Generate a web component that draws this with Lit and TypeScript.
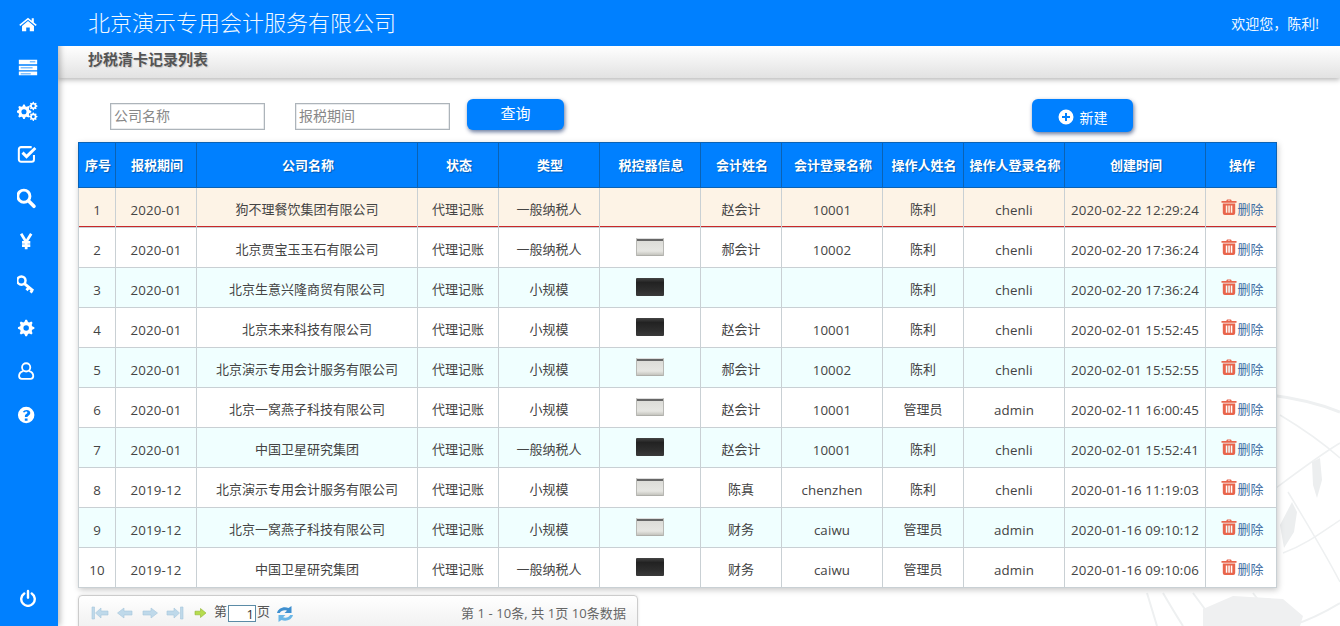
import { LitElement, html, css, svg } from "lit";
import { customElement } from "lit/decorators.js";

const gear = (cx: number, cy: number, r: number, hole: number, teeth = 8) => {
  let d = "";
  for (let i = 0; i < teeth * 4; i++) {
    const a = (i / (teeth * 4)) * Math.PI * 2 - Math.PI / teeth / 4 * 1;
    const R = i % 4 < 2 ? r : r * 0.76;
    d += `${i ? "L" : "M"}${(cx + R * Math.cos(a)).toFixed(2)} ${(cy + R * Math.sin(a)).toFixed(2)}`;
  }
  d += `Z M${cx + hole} ${cy}A${hole} ${hole} 0 1 0 ${cx - hole} ${cy}A${hole} ${hole} 0 1 0 ${cx + hole} ${cy}Z`;
  return d;
};

const icons = [
  svg`<g transform="translate(12 12) scale(.88) translate(-12 -12)"><path fill="#fff" d="M12 4.200 1.200 13l1.200 1.500L12 6.700l9.600 7.800 1.200-1.500-3.600-2.900V5h-2.600v3L12 4.200Z"/><path fill="#fff" d="M12 8.400 4.600 14.400V21h5.200v-4.600h4.400V21h5.200v-6.600L12 8.400Z"/></g>`,
  svg`<path fill="#fff" fill-rule="evenodd" d="M2 4h20v5H2V4Zm0 6.500h20v5H2v-5ZM2 17h20v4H2v-4Zm2 2v.8h11V19H4Zm0-6.400v.8h13v-.8H4ZM14 6v.8h6V6h-6Z"/>`,
  svg`<g transform="translate(-1 0)"><path fill="#fff" fill-rule="evenodd" d="${gear(8.6, 12.8, 8, 2.8)}"/><path fill="#fff" fill-rule="evenodd" d="${gear(18.8, 6.6, 4.6, 1.6)}"/><path fill="#fff" fill-rule="evenodd" d="${gear(18.8, 18.2, 4.6, 1.6)}"/></g>`,
  svg`<g transform="translate(-1 0)"><path fill="none" stroke="#fff" stroke-width="2.200" d="M19.500 13v5a2.500 2.500 0 0 1-2.500 2.500H5.500A2.500 2.500 0 0 1 3 18V7a2.500 2.500 0 0 1 2.500-2.500H17"/><path fill="none" stroke="#fff" stroke-width="3.200" d="m7 10.500 4.400 4.400L21 5.500"/></g>`,
  svg`<g transform="translate(-2.500 0)"><circle cx="10" cy="10" r="6.600" fill="none" stroke="#fff" stroke-width="3.200"/><path stroke="#fff" stroke-width="4" stroke-linecap="round" d="m15.500 15.500 5.500 5.500"/></g>`,
  svg`<g transform="translate(-2 0)"><path fill="none" stroke="#fff" stroke-width="3" d="m6.500 4 5.500 9 5.500-9M12 12v9M7.500 13.500h9M7.500 17h9"/></g>`,
  svg`<g transform="translate(-2.500 0) scale(.96)"><circle cx="7.600" cy="8.600" r="4.700" fill="none" stroke="#fff" stroke-width="2.800"/><path fill="none" stroke="#fff" stroke-width="3.200" d="m11 12 10 8.400M16 16.600l-2.600 3M20 19.800l-2 2.400"/></g>`,
  svg`<path fill="#fff" fill-rule="evenodd" d="${gear(10, 12, 9, 3)}"/>`,
  svg`<g transform="translate(10 12) scale(.9) translate(-12 -12)"><circle cx="12" cy="7.600" r="5" fill="none" stroke="#fff" stroke-width="2.200"/><path fill="none" stroke="#fff" stroke-width="2.200" d="M8.600 12.200C5.400 13 3.400 15 3.400 18.200c0 2.200 1.300 3.300 3.200 3.300h10.800c1.900 0 3.200-1.100 3.200-3.300 0-3.200-2-5.200-5.200-6"/></g>`,
  svg`<g transform="translate(10 12) scale(.88) translate(-12 -12)"><path fill="#fff" fill-rule="evenodd" d="M12 1.800a10.200 10.200 0 1 0 0 20.400 10.200 10.200 0 0 0 0-20.400ZM10.300 16.200h3.400v3h-3.400v-3Zm3.400-1.800h-3.300v-1c0-1.600.9-2.400 2-3.100.8-.5 1.100-.9 1.100-1.500 0-.7-.6-1.100-1.400-1.100-.9 0-1.700.5-2.300 1.300L7.800 8.300C8.800 6.700 10.300 5.700 12.600 5.700c2.500 0 4.500 1.300 4.500 3.600 0 1.800-1 2.700-2.200 3.500-.9.600-1.200.9-1.200 1.600Z"/></g>`,
];

const power = svg`<path fill="none" stroke="#fff" stroke-width="3.200" stroke-linecap="round" d="M7 6a9 9 0 1 0 10 0"/><path stroke="#fff" stroke-width="3.200" stroke-linecap="round" d="M12 2.500v9"/>`;

const cols = [37, 81, 221, 81, 101, 101, 81, 101, 81, 101, 141, 71];
const latinCols = new Set([0, 1, 7, 9, 10]);
const heads = ["序号", "报税期间", "公司名称", "状态", "类型", "税控器信息", "会计姓名", "会计登录名称", "操作人姓名", "操作人登录名称", "创建时间", "操作"];
type Row = [string, string, string, string, "" | "l" | "d", string, string, string, string, string];
const rows: Row[] = [
  ["2020-01", "狗不理餐饮集团有限公司", "代理记账", "一般纳税人", "", "赵会计", "10001", "陈利", "chenli", "2020-02-22 12:29:24"],
  ["2020-01", "北京贾宝玉玉石有限公司", "代理记账", "一般纳税人", "l", "郝会计", "10002", "陈利", "chenli", "2020-02-20 17:36:24"],
  ["2020-01", "北京生意兴隆商贸有限公司", "代理记账", "小规模", "d", "", "", "陈利", "chenli", "2020-02-20 17:36:24"],
  ["2020-01", "北京未来科技有限公司", "代理记账", "小规模", "d", "赵会计", "10001", "陈利", "chenli", "2020-02-01 15:52:45"],
  ["2020-01", "北京演示专用会计服务有限公司", "代理记账", "小规模", "l", "郝会计", "10002", "陈利", "chenli", "2020-02-01 15:52:55"],
  ["2020-01", "北京一窝燕子科技有限公司", "代理记账", "小规模", "l", "赵会计", "10001", "管理员", "admin", "2020-02-11 16:00:45"],
  ["2020-01", "中国卫星研究集团", "代理记账", "一般纳税人", "d", "赵会计", "10001", "陈利", "chenli", "2020-02-01 15:52:41"],
  ["2019-12", "北京演示专用会计服务有限公司", "代理记账", "小规模", "l", "陈真", "chenzhen", "陈利", "chenli", "2020-01-16 11:19:03"],
  ["2019-12", "北京一窝燕子科技有限公司", "代理记账", "小规模", "l", "财务", "caiwu", "管理员", "admin", "2020-01-16 09:10:12"],
  ["2019-12", "中国卫星研究集团", "代理记账", "一般纳税人", "d", "财务", "caiwu", "管理员", "admin", "2020-01-16 09:10:06"],
];

const trash = html`<svg class="trash" viewBox="0 0 16 16"><path fill="#e8654c" fill-rule="evenodd" d="M5.200 2 6 .4h4L10.800 2H15.500v1.800H.5V2h4.700ZM6.800 2h2.400l-.3-.6H7.100L6.800 2ZM1.800 4.600h12.400V14a2 2 0 0 1-2 2H3.800a2 2 0 0 1-2-2V4.600ZM4.800 6.500v7.200h1.500V6.500H4.800Zm2.500 0v7.200h1.500V6.500H7.300Zm2.500 0v7.200h1.500V6.500H9.800Z"/></svg>`;

const arrow = (d: string, c = "#bfd9ea") => html`<svg class="pg" viewBox="0 0 18 16"><path fill="${c}" stroke="#a6c6dc" stroke-width=".6" d="${d}"/></svg>`;

@customElement("app-root")
export class AppRoot extends LitElement {
  static styles = css`
    :host { display: block; width: 100%; height: 626px; overflow: hidden; position: relative;
      font-family: "Open Sans", "Noto Sans CJK SC", sans-serif; font-size: 13px; color: #444; background: #fff; }
    * { box-sizing: border-box; }
    .shell { display: flex; height: 626px; }
    .side { width: 58px; flex: none; background: #0080ff; display: flex; flex-direction: column; align-items: center;
      padding: 13px 0 19px; box-shadow: 2px 0 6px rgba(0,0,0,.28); position: relative; z-index: 3; }
    .side svg { width: 22px; height: 22px; display: block; margin-left: -2px; }
    .side svg.off { width: 18px; height: 18px; }
    .side .item { height: 43.4px; flex: none; }
    .side .spacer { flex: 1; }
    .main { flex: 1; min-width: 0; display: flex; flex-direction: column; position: relative; overflow: hidden; }
    .globe { position: absolute; right: 0; bottom: 0; width: 200px; height: 236px; pointer-events: none; }
    .top { height: 46px; flex: none; background: #0080ff; color: #fff; display: flex; align-items: center;
      justify-content: space-between; padding: 0 0 0 30px; position: relative; z-index: 4; }
    .brand { font-size: 22px; font-weight: 300; line-height: 44px; height: 46px; color: #f0f8ff; }
    .hello { font-size: 14px; margin-right: 21px; color: #f0f8ff; padding-bottom: 1px; }
    .crumb { height: 32px; flex: none; background: linear-gradient(#fff, #e2e2e2); box-shadow: 0 2px 5px rgba(0,0,0,.28);
      padding-left: 30px; font-size: 15px; font-weight: 700; color: #555; line-height: 27px; position: relative; text-shadow: 1px 1px 1px rgba(0,0,0,.15); }
    .body { flex: 1; padding: 21px 0 0 20px; position: relative; }
    .bar { display: flex; height: 43px; align-items: flex-start; }
    .field { width: 155px; height: 27px; margin-top: 4px; border: 1px solid #adb4ba; box-shadow: inset 0 0 0 .5px #d4d8db;
      background: #fff; font: 14px "Open Sans", "Noto Sans CJK SC", sans-serif; color: #888; padding: 0 3px 2px; outline: none; }
    .field::placeholder { color: #888; }
    .f1 { margin-left: 32px; }
    .f2 { margin-left: 30px; }
    .btn { border: 0; background: #0080ff; color: #fff; border-radius: 6px; box-shadow: 1px 2px 4px rgba(0,30,90,.6);
      font: 14px "Open Sans", "Noto Sans CJK SC", sans-serif; display: flex; align-items: center; justify-content: center; padding: 0; }
    .q { width: 97px; height: 31px; margin-left: 17px; font-size: 15px; padding-bottom: 5px; }
    .n { width: 101px; height: 33px; margin-left: 468px; gap: 6px; padding: 2px 0 0 0; }
    .n svg { width: 16px; height: 16px; }
    table { border-collapse: collapse; table-layout: fixed; width: 1198px; background: #fff; box-shadow: 1px 2px 6px rgba(0,0,0,.22); position: relative; }
    th { height: 45px; background: #0080ff; color: #fff; font-size: 13px; font-weight: 700; border: 1px solid #0b62b4; padding: 0 0 1px 2px;
      text-shadow: 1px 1px 1px rgba(0,0,0,.3); white-space: nowrap; }
    td { height: 40px; border: 1px solid #c9d0d4; text-align: center; padding: 1px 0 0; font-size: 13px; color: #444; white-space: nowrap; }
    td.num { font-size: 13.3px; letter-spacing: .13px; padding-top: 4px; }
    td.act { padding-top: 3px; }
    tr.alt td { background: #f0ffff; }
    tr.sel td { background: #fdf3e6; box-shadow: inset 0 -1px 0 #c8282a; }
    .dev { display: block; width: 28px; height: 18px; margin: -3px auto 0; border-radius: 1px; }
    .dev.l { background: linear-gradient(#ddd 0 1px, #666 1px 3px, #dcdcd8 3px, #e6e6e2 13px, #c4c4be 17px, #9a9a96 18px); box-shadow: inset 1px 0 0 #b8b8b4, inset -1px 0 0 #b8b8b4; }
    .dev.d { background: linear-gradient(#444, #222 25%, #2e2e2e 70%, #3a3a3a); }
    .del { display: inline-flex; align-items: flex-end; margin-left: 3px; color: #3f6ea3; }
    .trash { width: 16px; height: 16px; margin-bottom: 3px; }
    .pager { width: 560px; height: 40px; margin-top: 7px; border: 1px solid #ccc; border-radius: 4px; background: linear-gradient(#fff, #eee);
      box-shadow: 0 0 3px rgba(0,0,0,.12); display: flex; align-items: flex-start; padding: 9px 11px 0 12px; position: relative; color: #555; }
    .pg { width: 18px; height: 16px; margin-right: 7px; flex: none; }
    .pg.go { margin-right: 0; }
    .pg.re { width: 18px; height: 18px; margin: 0; margin-left: 6px; }
    .pnum { width: 28px; height: 17px; border: 1px solid #5b8ba6; background: #fff; color: #333; text-align: right; font-size: 13px; line-height: 16px; padding-right: 1px; margin: 0 1px 0 0; }
    .txt { line-height: 15px; margin-top: -1px; }
    .t1 { margin-left: 5px; margin-right: 1px; }
    .info { margin-left: auto; color: #666; line-height: 17px; letter-spacing: .08px; }
  `;

  render() {
    return html`<div class="shell">
      <nav class="side">
        ${icons.map((i) => html`<div class="item"><svg viewBox="0 0 24 24">${i}</svg></div>`)}
        <div class="spacer"></div>
        <svg class="off" viewBox="0 0 24 24">${power}</svg>
      </nav>
      <div class="main">
        <svg class="globe" viewBox="1140 390 200 236" fill="none" stroke="#eef0f1" stroke-width="1.500">
          <path d="M1270 395C1295 398 1320 404 1340 412" stroke-width="3"/>
          <path d="M1280 415C1300 427 1322 442 1340 458M1276 488C1300 470 1320 455 1340 443M1288 492C1308 525 1326 555 1340 582M1283 553C1305 545 1322 532 1340 520"/>
          <path d="M1147 593 1157 626M1163 593C1170 605 1176 615 1183 626M1193 593 1210 616M1253 593C1262 605 1270 615 1277 626M1290 626C1310 620 1325 612 1340 603" stroke-width="2"/>
          <path d="M1203 609 1233 596 1283 599 1303 616 1300 626H1203Z" fill="#eff0f1" stroke="none"/>
          <path d="M1312 462 1320 458 1322 480 1317 498 1313 485Z" fill="#eceeef" stroke="none"/>
          <path d="M1280 525 1292 502 1297 512 1294 532 1284 548Z" fill="#eceeef" stroke="none"/>
        </svg>
        <header class="top"><div class="brand">北京演示专用会计服务有限公司</div><div class="hello">欢迎您，陈利!</div></header>
        <div class="crumb">抄税清卡记录列表</div>
        <div class="body">
          <div class="bar">
            <input class="field f1" placeholder="公司名称" />
            <input class="field f2" placeholder="报税期间" />
            <button class="btn q">查询</button>
            <button class="btn n"><svg viewBox="0 0 16 16"><path fill="#fff" fill-rule="evenodd" d="M8 .5a7.500 7.500 0 1 0 0 15 7.500 7.500 0 0 0 0-15ZM7 4h2v3h3v2H9v3H7V9H4V7h3V4Z"/></svg>新建</button>
          </div>
          <table>
            <colgroup>${cols.map((w) => html`<col style="width:${w}px" />`)}</colgroup>
            <thead><tr>${heads.map((h) => html`<th>${h}</th>`)}</tr></thead>
            <tbody>
              ${rows.map((r, i) => {
                const cells = [String(i + 1), r[0], r[1], r[2], r[3], null, r[5], r[6], r[7], r[8], r[9]];
                return html`<tr class="${i === 0 ? "sel" : i % 2 === 0 ? "alt" : ""}">
                  ${cells.map((c, j) =>
                    c === null
                      ? html`<td>${r[4] ? html`<span class="dev ${r[4]}"></span>` : ""}</td>`
                      : html`<td class="${latinCols.has(j) ? "num" : ""}">${c}</td>`
                  )}
                  <td class="act"><span class="del">${trash}删除</span></td>
                </tr>`;
              })}
            </tbody>
          </table>
          <div class="pager">
            ${arrow("M1 2h2.500v12H1V2Zm3.500 6L10 3v3h7v4h-7v3L4.500 8Z")}
            ${arrow("M1.500 8 8 3v3h8v4H8v3L1.500 8Z")}
            ${arrow("M16.500 8 10 3v3H2v4h8v3l6.500-5Z")}
            ${arrow("M17 2h-2.500v12H17V2Zm-3.500 6L8 3v3H1v4h7v3l5.500-5Z")}
            <svg class="pg go" viewBox="0 0 18 16"><path fill="#b6dc4e" stroke="#8eb52f" stroke-width=".6" d="M15 8 9.500 3.500v2.700H4v3.600h5.500v2.700L15 8Z"/></svg>
            <span class="txt t1">第</span><span class="pnum">1</span><span class="txt">页</span>
            <svg class="pg re" viewBox="0 0 18 18"><path fill="#3f8fcf" d="M1 8C2 3.500 7.500 1 12.500 3L15.500 1v7h-7l2.500-2.300C8 4.600 5 5.800 3.800 8H1Z"/><path fill="#69b6e6" d="M17 10c-1 4.500-6.500 7-11.500 5l-3 2v-7h7L7 12.300c3 1.100 6-.1 7.200-2.300H17Z"/></svg>
            <span class="info">第 1 - 10条, 共 1页 10条数据</span>
          </div>
        </div>
      </div>
    </div>`;
  }
}
